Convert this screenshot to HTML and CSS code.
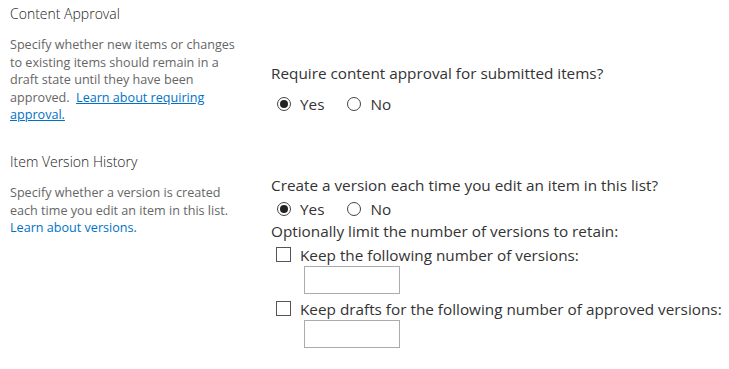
FILE: index.html
```html
<!DOCTYPE html>
<html lang="en">
<head>
    <meta charset="UTF-8">
    <title>Versioning Settings</title>
    <link rel="stylesheet" href="styles.css">
</head>
<body>

    <div id="main_wrap">

        <!-- content approval -->
        <div class="section approval">
            <div class="info">
                <h3 class="title">Content Approval</h3>
                <p class="desc">Specify whether new items or changes<br>to existing items should remain in a<br>draft state until they have been<br>approved. &nbsp;<a href="#" class="link under">Learn about requiring<br>approval.</a></p>
            </div>
            <div class="field">
                <div class="question">Require content approval for submitted items?</div>
                <div class="choices">
                    <label class="choice"><span class="radio on"></span>Yes</label>
                    <label class="choice"><span class="radio"></span>No</label>
                </div>
            </div>
        </div>

        <!-- item version history -->
        <div class="section history">
            <div class="info">
                <h3 class="title">Item Version History</h3>
                <p class="desc">Specify whether a version is created<br>each time you edit an item in this list.<br><a href="#" class="link">Learn about versions.</a></p>
            </div>
            <div class="field">
                <div class="question">Create a version each time you edit an item in this list?</div>
                <div class="choices tight">
                    <label class="choice"><span class="radio on"></span>Yes</label>
                    <label class="choice"><span class="radio"></span>No</label>
                </div>
                <div class="question">Optionally limit the number of versions to retain:</div>
                <label class="check"><span class="box"></span>Keep the following number of versions:</label>
                <input type="text" class="num">
                <label class="check"><span class="box"></span>Keep drafts for the following number of approved versions:</label>
                <input type="text" class="num">
            </div>
        </div>

    </div>

</body>
</html>
```

FILE: styles.css
```css
* {
    margin: 0;
    padding: 0;
    box-sizing: border-box;
}

body {
    font-family: "Open Sans", "Noto Sans", sans-serif;
    color: #333;
    background-color: #fff;
}

#main_wrap {
    padding: 4px 0 0 10px;
}

.section {
    display: grid;
    grid-template-columns: 240px 1fr;
    column-gap: 21px;
}

.title {
    font-size: 14px;
    font-weight: 300;
    line-height: 20px;
    color: #222;
}

.desc {
    margin-top: 12px;
    font-size: 12.6px;
    line-height: 17.6px;
    color: #666;
    white-space: nowrap;
}

.link {
    color: #0072c6;
    text-decoration: none;
}

.link.under {
    text-decoration: underline;
}

.approval .field {
    padding-top: 59px;
}

.history {
    margin-top: 28px;
}

.history .field {
    padding-top: 23px;
}

.question {
    font-size: 15.3px;
    line-height: 20px;
    color: #333;
}

.choices {
    display: flex;
    gap: 23px;
    margin: 11px 0 0 6px;
}

.choices.tight {
    margin-top: 4px;
    margin-bottom: 2px;
}

.choice,
.check {
    display: flex;
    align-items: center;
    font-size: 15.3px;
    line-height: 20px;
}

.radio {
    width: 14px;
    height: 14px;
    margin-right: 9px;
    border: 1px solid #444;
    border-radius: 50%;
    display: flex;
    align-items: center;
    justify-content: center;
}

.radio.on::after {
    content: "";
    width: 8px;
    height: 8px;
    border-radius: 50%;
    background-color: #222;
}

.check {
    margin: 4px 0 0 5px;
}

.num + .check {
    margin-top: 5px;
}

.box {
    width: 15px;
    height: 15px;
    margin-right: 9px;
    border: 1px solid #555;
}

.num {
    display: block;
    width: 96px;
    height: 28px;
    margin: 1px 0 0 33px;
    border: 1px solid #ababab;
}
```
